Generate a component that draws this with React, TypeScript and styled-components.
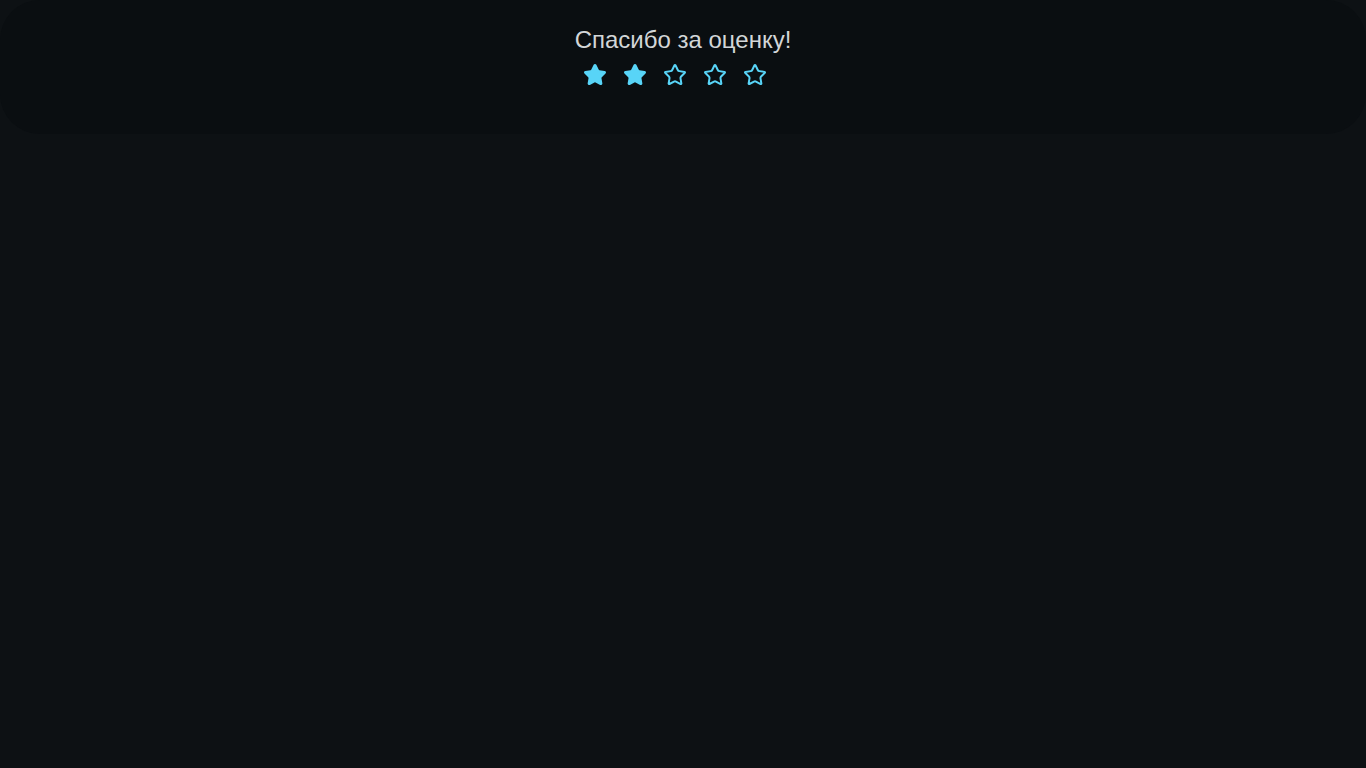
import React from 'react'
import styled, { createGlobalStyle } from 'styled-components'
import { Star } from 'lucide-react'

const GlobalStyle = createGlobalStyle`
  html, body {
    margin: 0;
    padding: 0;
    background: #0d1114;
    font-family: "Liberation Sans", Arial, sans-serif;
  }
`

const Page = styled.div`
  min-height: 100vh;
  background: #0d1114;
`

const Card = styled.section`
  background: #0a0e11;
  border-radius: 40px;
  padding: 24px 16px 47px;
  display: flex;
  flex-direction: column;
  align-items: center;
  gap: 7px;
`

const Title = styled.h2`
  margin: 0;
  font-size: 24px;
  line-height: 32px;
  font-weight: 400;
  color: #d3d6d8;
`

// each star keeps a trailing gap, so the row sits a little left of centre
const Stars = styled.div`
  display: flex;
`

const StarButton = styled.button<{ filled: boolean }>`
  background: none;
  border: 0;
  padding: 0;
  margin-right: 16px;
  width: 24px;
  height: 24px;
  cursor: pointer;
  color: #58d4f7;
  display: flex;

  svg {
    fill: ${({ filled }) => (filled ? '#58d4f7' : 'none')};
  }
`

const App: React.FC = () => {
  const rating = 2
  return (
    <Page>
      <GlobalStyle />
      <Card>
        <Title>Спасибо за оценку!</Title>
        <Stars>
          {[1, 2, 3, 4, 5].map(n => (
            <StarButton key={n} filled={n <= rating} aria-label={`${n}`}>
              <Star size={24} strokeWidth={2} />
            </StarButton>
          ))}
        </Stars>
      </Card>
    </Page>
  )
}

export default App
